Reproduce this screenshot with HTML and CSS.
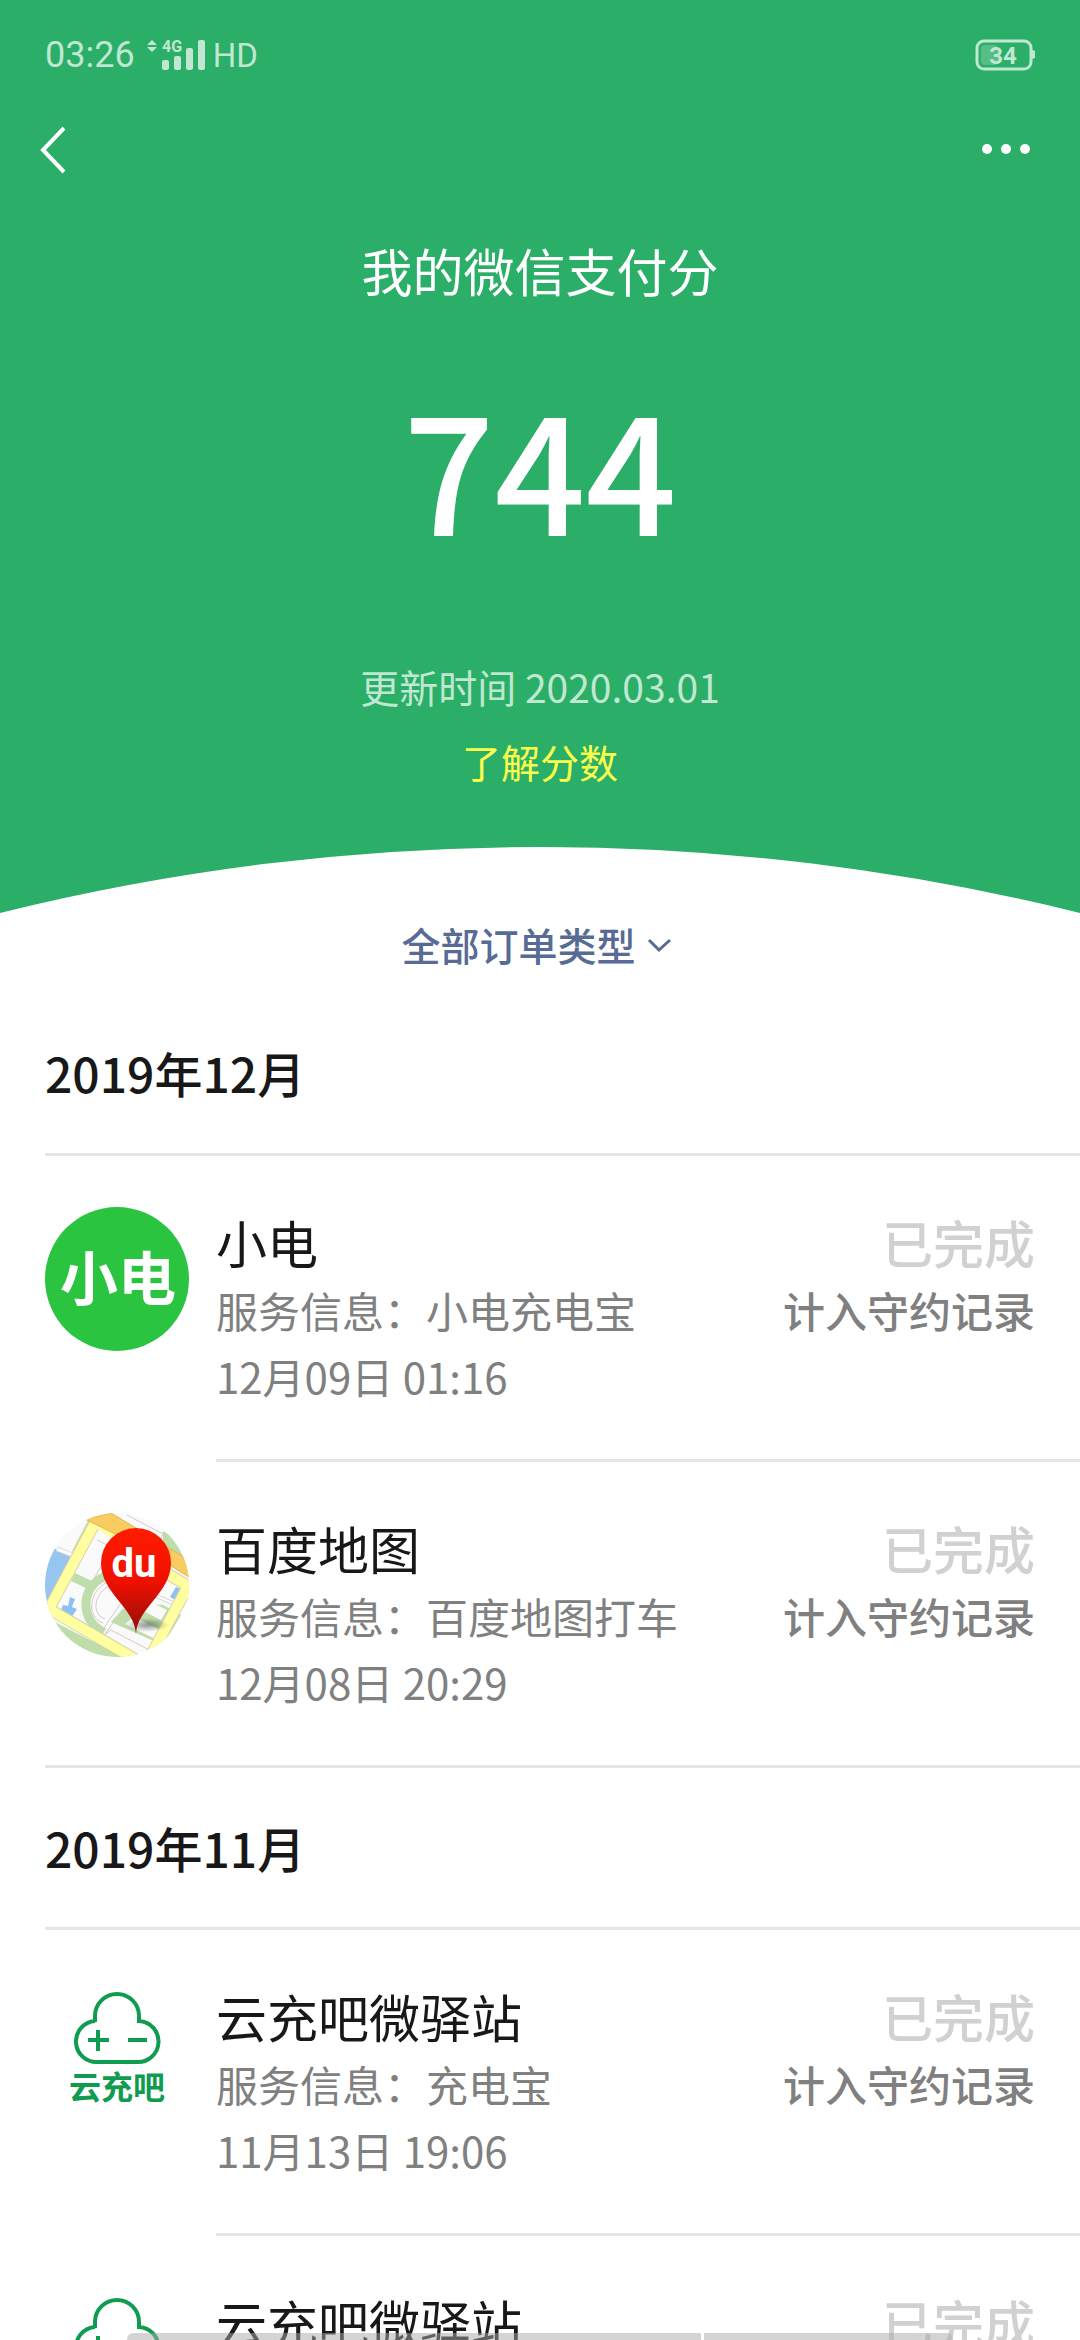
FILE: index.html
```html
<!DOCTYPE html>
<html lang="zh-CN">
<head>
    <meta charset="UTF-8">
    <meta name="viewport" content="width=device-width, initial-scale=1.0">
    <title>我的微信支付分</title>
    <link rel="stylesheet" href="styles.css">
</head>
<body>
    <!-- shared logo, used by more than one order -->
    <svg class="defs" aria-hidden="true">
        <symbol id="logo-yunchongba" viewBox="0 0 144 144">
            <g fill="none" stroke="#0f9b50" stroke-width="4">
                <path d="M50 41V35a22 22 0 0 1 44 0v5A20 20 0 0 1 92 81H53A20 20 0 0 1 50 40"/>
                <path d="M43 59h21M53 49v21M83 59h19"/>
            </g>
            <text x="72" y="118" class="logo-text" font-size="32" fill="#0f9b50">云充吧</text>
        </symbol>
    </svg>

    <div class="screen">
        <header class="hero">
            <div class="status-bar">
                <div class="status-left">
                    <span>03:26</span>
                    <svg width="60" height="34" viewBox="0 0 60 34" fill="currentColor" aria-hidden="true">
                        <path d="M5 2l5 5H0zM5 14l5-5H0z"/>
                        <text x="15" y="14" class="signal-text" font-size="16">4G</text>
                        <rect x="15" y="22" width="7" height="10" rx="2"/>
                        <rect x="27" y="18" width="7" height="14" rx="2"/>
                        <rect x="39" y="10" width="7" height="22" rx="2"/>
                        <rect x="51" y="2" width="7" height="30" rx="2"/>
                    </svg>
                    <span class="hd">HD</span>
                </div>
                <svg width="60" height="32" viewBox="0 0 60 32" fill="none" aria-hidden="true">
                    <rect x="6" y="6" width="17" height="20" rx="4" fill="#fff" opacity=".2"/>
                    <rect x="2" y="2" width="54" height="28" rx="7" stroke="currentColor" stroke-width="3"/>
                    <path d="M57 11a4 4 0 0 1 0 9z" fill="currentColor"/>
                    <text x="28" y="25" class="battery-text" font-size="24" fill="currentColor">34</text>
                </svg>
            </div>

            <nav class="nav-bar">
                <button class="nav-button" aria-label="返回">
                    <svg width="26" height="48" viewBox="0 0 26 48" fill="none" stroke="#fff" stroke-width="4">
                        <path d="M24 1L3 23l21 22"/>
                    </svg>
                </button>
                <button class="nav-button" aria-label="更多">
                    <svg width="54" height="48" viewBox="0 0 54 48" fill="#fff">
                        <circle cx="11" cy="22" r="5"/>
                        <circle cx="30" cy="22" r="5"/>
                        <circle cx="49" cy="22" r="5"/>
                    </svg>
                </button>
            </nav>

            <h1 class="title">我的微信支付分</h1>
            <div class="score">744</div>
            <p class="updated">更新时间 2020.03.01</p>
            <a class="learn-more" href="#">了解分数</a>

            <svg class="curve" viewBox="0 0 1080 66" preserveAspectRatio="none" aria-hidden="true">
                <path d="M0 66A2242 2242 0 0 1 1080 66z" fill="#fff"/>
            </svg>
        </header>

        <main>
            <label class="filter">
                <select aria-label="订单类型">
                    <option>全部订单类型</option>
                </select>
                <svg width="42" height="24" viewBox="0 0 42 24" fill="none" stroke="currentColor" stroke-width="3" aria-hidden="true">
                    <path d="M12 8l10 10L33 8"/>
                </svg>
            </label>

            <section class="month">
                <h2>2019年12月</h2>
                <ul class="orders">
                    <li class="order">
                        <svg class="avatar" viewBox="0 0 144 144" role="img" aria-label="小电">
                            <circle cx="72" cy="72" r="72" fill="#2ac441"/>
                            <text x="73" y="93" class="logo-text" font-size="58" fill="#fff">小电</text>
                        </svg>
                        <div class="order-body">
                            <div class="order-info">
                                <h3>小电</h3>
                                <p>服务信息：小电充电宝</p>
                                <p>12月09日 01:16</p>
                            </div>
                            <div class="order-state">
                                <div class="done">已完成</div>
                                <div class="record">计入守约记录</div>
                            </div>
                        </div>
                    </li>
                    <li class="order">
                        <svg class="avatar" viewBox="0 0 144 144" role="img" aria-label="百度地图">
                            <defs>
                                <clipPath id="round"><circle cx="72" cy="72" r="72"/></clipPath>
                                <linearGradient id="pin" x1="0" y1="0" x2="0" y2="1">
                                    <stop offset="0" stop-color="#ff1c00"/>
                                    <stop offset=".5" stop-color="#f01000"/>
                                    <stop offset="1" stop-color="#8f0e0a"/>
                                </linearGradient>
                                <radialGradient id="shade">
                                    <stop offset="0" stop-color="#000" stop-opacity=".4"/>
                                    <stop offset="1" stop-color="#000" stop-opacity="0"/>
                                </radialGradient>
                            </defs>
                            <g clip-path="url(#round)">
                                <rect width="144" height="144" fill="#fafafa"/>
                                <!-- water and parks -->
                                <path d="M-2 34L12 36L30 43L4 92L-2 88z" fill="#96c5f0"/>
                                <path d="M0 104L82 146H0z" fill="#bfdcab"/>
                                <path d="M118 18L144 30V62L118 46z" fill="#bfdcab"/>
                                <path d="M48 8L31 40" stroke="#bfdcab" stroke-width="9"/>
                                <path d="M12 36l18 7" stroke="#d8d4cf" stroke-width="5"/>
                                <path d="M12 36l18 7" stroke="#fff" stroke-width="3"/>
                                <g fill="none" stroke="#bfdcab" stroke-width="9">
                                    <path d="M64 62C36 70 34 104 55 117L51 124"/>
                                    <path d="M28 64l17 8"/>
                                </g>
                                <g fill="none" stroke="#d0cbc8" stroke-width="1">
                                    <path d="M66 68C44 74 40 104 58 110"/>
                                    <path d="M69 71C49 77 45 101 60 106"/>
                                    <path d="M80 93L58 124M76 90L54 122"/>
                                    <path d="M52 27l14 7l-18 34"/>
                                    <path d="M60 18l56 33"/>
                                    <path d="M82 2l36 19l-4 9"/>
                                </g>
                                <path d="M77 97l14-7l27 2l18 10l-18 30l-52-23z" fill="#bfdcab"/>
                                <path d="M104 88l18 9l-6 10l-18-9zM80 111l32 16l5-9l-28-14z" fill="#fafafa"/>
                                <path d="M66 117l42 22l-6 8l-44-24z" fill="#fafafa" stroke="#d0cbc8"/>
                                <path d="M25 84l5 2l-3 8l5 2l-6 9l-11-5l3-8l5 1z" fill="#8cc1f4"/>
                                <path d="M131 74l7 3l-6 11l-7-4z" fill="#8cc1f4"/>
                                <path d="M98 77l34 15" stroke="#d0cbc8" stroke-width="4"/>
                                <path d="M98 77l34 15" stroke="#fff" stroke-width="2"/>
                                <!-- roads -->
                                <g fill="none" stroke-linejoin="miter">
                                    <path d="M50 10L4 96L90 146M118 58L143 73L106 142" stroke="#d9d4a8" stroke-width="12"/>
                                    <path d="M50 10L4 96L90 146M118 58L143 73L106 142" stroke="#ffffa0" stroke-width="10"/>
                                    <path d="M46 9L118 54" stroke="#ffffa0" stroke-width="5"/>
                                </g>
                                <path d="M40 6L66 0L144 47V64L118 48L84 28z" fill="#f8cc60" stroke="#e3b44f" stroke-width="1"/>
                            </g>
                            <ellipse cx="102" cy="112" rx="22" ry="7" fill="url(#shade)"/>
                            <path d="M91 121C90 95 56 80 56 50a35 35 0 0 1 70 0C126 80 92 95 91 121z" fill="url(#pin)"/>
                            <text x="89" y="64" class="pin-text" font-size="40" fill="#fff">du</text>
                        </svg>
                        <div class="order-body">
                            <div class="order-info">
                                <h3>百度地图</h3>
                                <p>服务信息：百度地图打车</p>
                                <p>12月08日 20:29</p>
                            </div>
                            <div class="order-state">
                                <div class="done">已完成</div>
                                <div class="record">计入守约记录</div>
                            </div>
                        </div>
                    </li>
                </ul>
            </section>

            <section class="month">
                <h2>2019年11月</h2>
                <ul class="orders">
                    <li class="order">
                        <svg class="avatar" role="img" aria-label="云充吧"><use href="#logo-yunchongba"/></svg>
                        <div class="order-body">
                            <div class="order-info">
                                <h3>云充吧微驿站</h3>
                                <p>服务信息：充电宝</p>
                                <p>11月13日 19:06</p>
                            </div>
                            <div class="order-state">
                                <div class="done">已完成</div>
                                <div class="record">计入守约记录</div>
                            </div>
                        </div>
                    </li>
                    <li class="order">
                        <svg class="avatar" role="img" aria-label="云充吧"><use href="#logo-yunchongba"/></svg>
                        <div class="order-body">
                            <div class="order-info">
                                <h3>云充吧微驿站</h3>
                            </div>
                            <div class="order-state">
                                <div class="done">已完成</div>
                            </div>
                        </div>
                    </li>
                </ul>
            </section>
        </main>

        <div class="gesture-bar"><span></span><span></span></div>
    </div>
</body>
</html>
```
FILE: styles.css
```css
* {
    box-sizing: border-box;
    margin: 0;
    padding: 0;
}

body {
    background: #fff;
    color: #181818;
    font-family: "Noto Sans CJK SC", sans-serif;
}

svg {
    display: block;
}

.defs {
    position: absolute;
    width: 0;
    height: 0;
}

.screen {
    position: relative;
    height: 100vh;
    overflow: hidden;
}

/* green header */
.hero {
    display: flex;
    flex-direction: column;
    align-items: center;
    background: #2bae67;
    color: #fff;
}

.status-bar,
.nav-bar {
    display: flex;
    align-items: center;
    justify-content: space-between;
    width: 100%;
}

.status-bar {
    height: 110px;
    padding: 0 45px;
    color: #bfe7d1;
    font-family: Roboto, sans-serif;
    font-size: 36px;
}

.status-left {
    display: flex;
    align-items: center;
    gap: 12px;
}

.hd {
    margin-left: -6px;
    font-size: 33px;
}

.signal-text {
    font-family: Roboto, sans-serif;
    font-weight: 700;
}

.battery-text {
    font-family: Roboto, sans-serif;
    font-weight: 700;
    text-anchor: middle;
}

.nav-bar {
    height: 82px;
    padding: 0 50px 0 40px;
}

.nav-button {
    border: none;
    background: none;
    cursor: pointer;
}

.title {
    margin-top: 42px;
    font-size: 51px;
    font-weight: 400;
    line-height: 72px;
}

.score {
    margin-top: 79px;
    font-size: 160px;
    font-weight: 500;
    line-height: 162px;
}

.updated,
.learn-more {
    font-size: 39px;
    line-height: 75px;
}

.updated {
    margin-top: 102px;
    color: #bfe7d1;
}

.learn-more {
    color: #faff4b;
    text-decoration: none;
}

.curve {
    width: 100%;
    height: 66px;
    margin-top: 48px;
}

/* order type */
.filter {
    display: flex;
    align-items: center;
    justify-content: center;
    height: 62px;
    margin-bottom: 18px;
    color: #576b95;
}

.filter select {
    appearance: none;
    border: none;
    background: none;
    color: inherit;
    font: inherit;
    font-size: 39px;
    font-weight: 500;
    line-height: 60px;
}

/* orders */
.month {
    padding-left: 45px;
}

.month h2 {
    height: 160px;
    font-size: 48px;
    font-weight: 500;
    line-height: 158px;
}

.month + .month h2 {
    border-top: 3px solid #e5e5e5;
    height: 162px;
}

.orders {
    border-top: 3px solid #e5e5e5;
    list-style: none;
}

.order {
    display: flex;
    gap: 27px;
}

.avatar {
    flex: none;
    width: 144px;
    height: 144px;
    margin-top: 51px;
}

.order-body {
    flex: 1;
    display: flex;
    justify-content: space-between;
    padding: 51px 45px 51px 0;
}

.order:not(:last-child) .order-body {
    border-bottom: 3px solid #e5e5e5;
}

.order h3,
.done {
    font-size: 51px;
    font-weight: 400;
    line-height: 70px;
}

.order p,
.record {
    color: #808080;
    font-size: 42px;
    line-height: 66px;
}

.order-body {
    padding-bottom: 50px;
}

.order-state {
    text-align: right;
}

.done,
.record {
    font-weight: 500;
}

.done {
    color: #d1d1d1;
}

.logo-text {
    font-family: "Noto Sans CJK SC", sans-serif;
    font-weight: 700;
    text-anchor: middle;
}

.pin-text {
    font-family: Roboto, sans-serif;
    font-weight: 700;
    text-anchor: middle;
}

/* system gesture hints over the page */
.gesture-bar {
    position: absolute;
    right: 0;
    bottom: 0;
    left: 0;
    display: flex;
    gap: 3px;
    padding: 0 127px;
}

.gesture-bar span {
    flex: 1;
    height: 7px;
    background: rgba(170, 170, 170, 0.5);
}

.gesture-bar span:first-child {
    flex: 2.3;
    border-top-left-radius: 6px;
}

.gesture-bar span:last-child {
    border-top-right-radius: 6px;
}
```
